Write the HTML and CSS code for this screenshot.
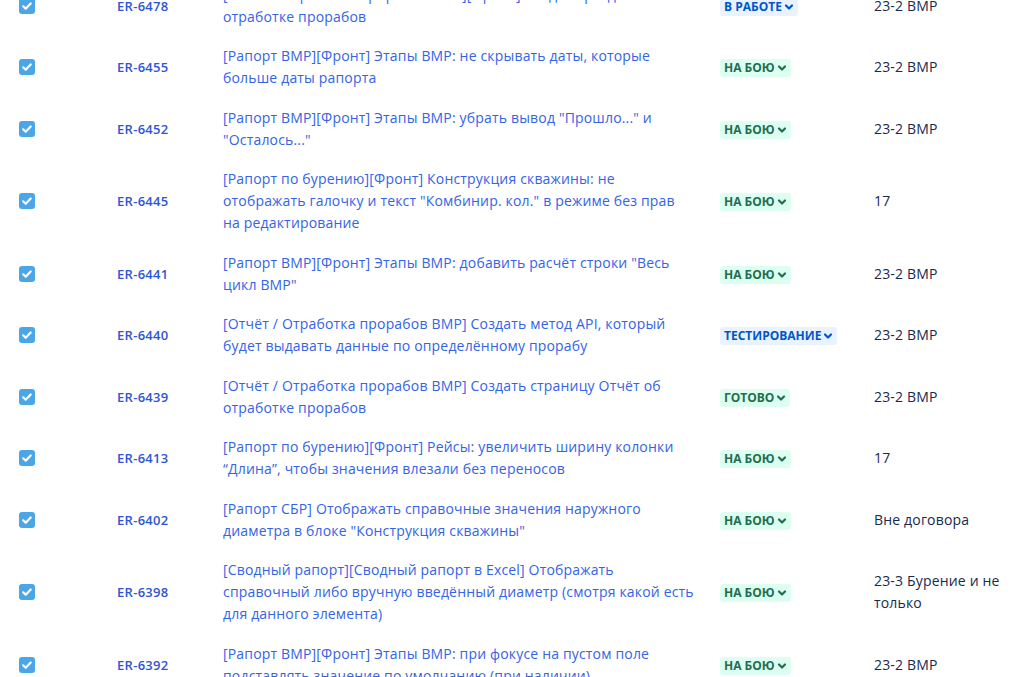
FILE: index.html
```html
<!DOCTYPE html>
<html lang="ru">
<head>
  <meta charset="UTF-8">
  <title>Задачи</title>
  <link rel="stylesheet" href="styles.css">
</head>
<body>
  <div class="issues">
    <div class="row">
      <div class="cell"><span class="check"><svg viewBox="0 0 16 16"><path d="M4.2 8.3l2.5 2.4 5-5.2"/></svg></span></div>
      <div class="cell key">ER-6478</div>
      <div class="cell summary"><a href="#">[Отчёт / Отработка прорабов ВМР][Фронт] Создать раздел по отработке прорабов</a></div>
      <div class="cell"><span class="lozenge blue">В работе<svg viewBox="0 0 10 10"><path d="M2 3.5l3 3 3-3"/></svg></span></div>
      <div class="cell version">23-2 ВМР</div>
    </div>
    <div class="row">
      <div class="cell"><span class="check"><svg viewBox="0 0 16 16"><path d="M4.2 8.3l2.5 2.4 5-5.2"/></svg></span></div>
      <div class="cell key">ER-6455</div>
      <div class="cell summary"><a href="#">[Рапорт ВМР][Фронт] Этапы ВМР: не скрывать даты, которые больше даты рапорта</a></div>
      <div class="cell"><span class="lozenge green">На бою<svg viewBox="0 0 10 10"><path d="M2 3.5l3 3 3-3"/></svg></span></div>
      <div class="cell version">23-2 ВМР</div>
    </div>
    <div class="row">
      <div class="cell"><span class="check"><svg viewBox="0 0 16 16"><path d="M4.2 8.3l2.5 2.4 5-5.2"/></svg></span></div>
      <div class="cell key">ER-6452</div>
      <div class="cell summary"><a href="#">[Рапорт ВМР][Фронт] Этапы ВМР: убрать вывод "Прошло..." и "Осталось..."</a></div>
      <div class="cell"><span class="lozenge green">На бою<svg viewBox="0 0 10 10"><path d="M2 3.5l3 3 3-3"/></svg></span></div>
      <div class="cell version">23-2 ВМР</div>
    </div>
    <div class="row">
      <div class="cell"><span class="check"><svg viewBox="0 0 16 16"><path d="M4.2 8.3l2.5 2.4 5-5.2"/></svg></span></div>
      <div class="cell key">ER-6445</div>
      <div class="cell summary"><a href="#">[Рапорт по бурению][Фронт] Конструкция скважины: не отображать галочку и текст "Комбинир. кол." в режиме без прав на редактирование</a></div>
      <div class="cell"><span class="lozenge green">На бою<svg viewBox="0 0 10 10"><path d="M2 3.5l3 3 3-3"/></svg></span></div>
      <div class="cell version">17</div>
    </div>
    <div class="row">
      <div class="cell"><span class="check"><svg viewBox="0 0 16 16"><path d="M4.2 8.3l2.5 2.4 5-5.2"/></svg></span></div>
      <div class="cell key">ER-6441</div>
      <div class="cell summary"><a href="#">[Рапорт ВМР][Фронт] Этапы ВМР: добавить расчёт строки "Весь цикл ВМР"</a></div>
      <div class="cell"><span class="lozenge green">На бою<svg viewBox="0 0 10 10"><path d="M2 3.5l3 3 3-3"/></svg></span></div>
      <div class="cell version">23-2 ВМР</div>
    </div>
    <div class="row">
      <div class="cell"><span class="check"><svg viewBox="0 0 16 16"><path d="M4.2 8.3l2.5 2.4 5-5.2"/></svg></span></div>
      <div class="cell key">ER-6440</div>
      <div class="cell summary"><a href="#">[Отчёт / Отработка прорабов ВМР] Создать метод API, который будет выдавать данные по определённому прорабу</a></div>
      <div class="cell"><span class="lozenge blue">Тестирование<svg viewBox="0 0 10 10"><path d="M2 3.5l3 3 3-3"/></svg></span></div>
      <div class="cell version">23-2 ВМР</div>
    </div>
    <div class="row">
      <div class="cell"><span class="check"><svg viewBox="0 0 16 16"><path d="M4.2 8.3l2.5 2.4 5-5.2"/></svg></span></div>
      <div class="cell key">ER-6439</div>
      <div class="cell summary"><a href="#">[Отчёт / Отработка прорабов ВМР] Создать страницу Отчёт об отработке прорабов</a></div>
      <div class="cell"><span class="lozenge green">Готово<svg viewBox="0 0 10 10"><path d="M2 3.5l3 3 3-3"/></svg></span></div>
      <div class="cell version">23-2 ВМР</div>
    </div>
    <div class="row">
      <div class="cell"><span class="check"><svg viewBox="0 0 16 16"><path d="M4.2 8.3l2.5 2.4 5-5.2"/></svg></span></div>
      <div class="cell key">ER-6413</div>
      <div class="cell summary"><a href="#">[Рапорт по бурению][Фронт] Рейсы: увеличить ширину колонки “Длина”, чтобы значения влезали без переносов</a></div>
      <div class="cell"><span class="lozenge green">На бою<svg viewBox="0 0 10 10"><path d="M2 3.5l3 3 3-3"/></svg></span></div>
      <div class="cell version">17</div>
    </div>
    <div class="row">
      <div class="cell"><span class="check"><svg viewBox="0 0 16 16"><path d="M4.2 8.3l2.5 2.4 5-5.2"/></svg></span></div>
      <div class="cell key">ER-6402</div>
      <div class="cell summary"><a href="#">[Рапорт СБР] Отображать справочные значения наружного диаметра в блоке "Конструкция скважины"</a></div>
      <div class="cell"><span class="lozenge green">На бою<svg viewBox="0 0 10 10"><path d="M2 3.5l3 3 3-3"/></svg></span></div>
      <div class="cell version">Вне договора</div>
    </div>
    <div class="row">
      <div class="cell"><span class="check"><svg viewBox="0 0 16 16"><path d="M4.2 8.3l2.5 2.4 5-5.2"/></svg></span></div>
      <div class="cell key">ER-6398</div>
      <div class="cell summary"><a href="#">[Сводный рапорт][Сводный рапорт в Excel] Отображать справочный либо вручную введённый диаметр (смотря какой есть для данного элемента)</a></div>
      <div class="cell"><span class="lozenge green">На бою<svg viewBox="0 0 10 10"><path d="M2 3.5l3 3 3-3"/></svg></span></div>
      <div class="cell version">23-3 Бурение и не только</div>
    </div>
    <div class="row">
      <div class="cell"><span class="check"><svg viewBox="0 0 16 16"><path d="M4.2 8.3l2.5 2.4 5-5.2"/></svg></span></div>
      <div class="cell key">ER-6392</div>
      <div class="cell summary"><a href="#">[Рапорт ВМР][Фронт] Этапы ВМР: при фокусе на пустом поле подставлять значение по умолчанию (при наличии)</a></div>
      <div class="cell"><span class="lozenge green">На бою<svg viewBox="0 0 10 10"><path d="M2 3.5l3 3 3-3"/></svg></span></div>
      <div class="cell version">23-2 ВМР</div>
    </div>
  </div>
</body>
</html>
```

FILE: styles.css
```css
html, body {
  height: 100%;
}
body {
  margin: 0;
  overflow: hidden;
  background-color: #fff;
  font-family: "Open Sans", "Noto Sans", sans-serif;
  font-size: 14px;
  line-height: 22px;
  letter-spacing: 0.17px;
  color: #172b4d;
}
.issues {
  margin-top: -25px;
  padding-left: 19px;
}
.row {
  display: grid;
  grid-template-columns: 98px 106px 497px 154px 1fr;
  align-items: center;
  padding: 8.75px 0;
}
.cell {
  min-width: 0;
}
.check {
  display: block;
  width: 16px;
  height: 16px;
  border-radius: 3px;
  background-color: #4ba6e8;
}
.check svg {
  display: block;
  width: 16px;
  height: 16px;
  fill: none;
  stroke: #fff;
  stroke-width: 2.2;
  stroke-linecap: round;
  stroke-linejoin: round;
}
.key {
  font-size: 13px;
  font-weight: 600;
  letter-spacing: 0.3px;
  color: #2f55d4;
}
.summary {
  padding-right: 26px;
}
.summary a {
  color: #3463e6;
  text-decoration: none;
}
.lozenge {
  display: inline-flex;
  align-items: center;
  padding: 0 4px;
  height: 18px;
  border-radius: 3px;
  font-size: 12px;
  font-weight: 700;
  line-height: 18px;
  letter-spacing: 0;
  text-transform: uppercase;
}
.lozenge svg {
  width: 10px;
  height: 10px;
  margin-left: 2px;
  fill: none;
  stroke: currentColor;
  stroke-width: 2.2;
  stroke-linecap: round;
  stroke-linejoin: round;
}
.lozenge.blue {
  background-color: #e9f2ff;
  color: #0055cc;
}
.lozenge.green {
  background-color: #dcfff1;
  color: #216e4e;
}
.version {
  padding-right: 6px;
  color: #172b4d;
}
```
